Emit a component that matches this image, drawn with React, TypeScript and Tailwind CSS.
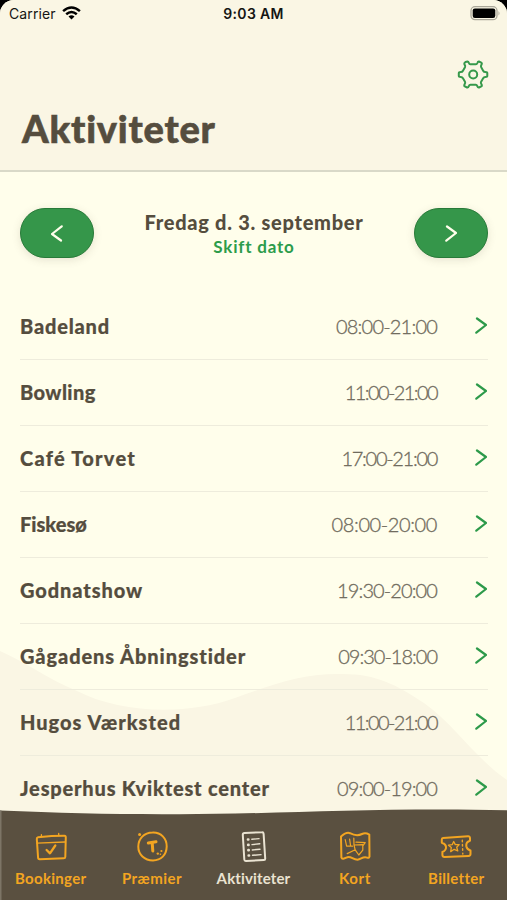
import React from 'react';

const activities = [
  { name: 'Badeland', time: '08:00-21:00', nameCls: 'tracking-[0.8px]', timeCls: 'tracking-[-0.8px]' },
  { name: 'Bowling', time: '11:00-21:00', nameCls: 'tracking-[0.4px]', timeCls: 'tracking-[-1.6px]' },
  { name: 'Café Torvet', time: '17:00-21:00', nameCls: 'tracking-[1.25px]', timeCls: 'tracking-[-1.3px]' },
  { name: 'Fiskesø', time: '08:00-20:00', nameCls: 'tracking-[0px]', timeCls: 'tracking-[-0.4px]' },
  { name: 'Godnatshow', time: '19:30-20:00', nameCls: 'tracking-[0.9px]', timeCls: 'tracking-[-0.9px]' },
  { name: 'Gågadens Åbningstider', time: '09:30-18:00', nameCls: 'tracking-[0.9px]', timeCls: 'tracking-[-1px]' },
  { name: 'Hugos Værksted', time: '11:00-21:00', nameCls: 'tracking-[1px]', timeCls: 'tracking-[-1.6px]' },
  { name: 'Jesperhus Kviktest center', time: '09:00-19:00', nameCls: 'tracking-[0.8px]', timeCls: 'tracking-[-0.9px]' },
];

const line = { fill: 'none', stroke: 'currentColor', strokeLinecap: 'round', strokeLinejoin: 'round' } as const;

const Chevron: React.FC<{ className?: string }> = ({ className }) => (
  <svg viewBox="0 0 12 17" className={className} {...line} strokeWidth="2.2">
    <path d="M2 1.5 L11 8 L1.3 15.7" />
  </svg>
);

const BookingIcon = () => (
  <svg width="34" height="34" viewBox="0 0 34 34" {...line} strokeWidth="2">
    <path d="M4 7.2 Q18 5.8 30.5 5.8 Q31.8 5.8 31.8 7.4 L31.3 27 Q31.2 28.3 29.8 28.3 L5.8 29.3 Q4.3 29.4 4.1 28 L2.8 9 Q2.7 7.4 4 7.2Z" />
    <path d="M3.2 13.2 L31 12" strokeWidth="1.3" />
    <path d="M7.4 4.6 V6.5 M24.7 3.5 V5.5" strokeWidth="1.3" />
    <path d="M12.6 20 L16 23.3 L21.3 15.5" strokeWidth="2.3" />
  </svg>
);

const PrizeIcon = () => (
  <svg width="34" height="34" viewBox="0 0 34 34" {...line} strokeWidth="2">
    <path d="M17.5 2.6 C26 2.2 31.8 8.5 31.7 16.5 C31.5 25 26 30.3 18 30.4 C9.5 30.3 3.2 24.5 3.3 16.5 C3.4 8.5 9 2.8 17.5 2.6Z" />
    <path d="M13.3 13 L21 11.8 M17.2 12.7 L17.8 21" strokeWidth="3" />
    <circle cx="4.6" cy="4.6" r="1.5" fill="currentColor" stroke="none" />
    <circle cx="22.8" cy="23.6" r="1.2" fill="currentColor" stroke="none" />
    <circle cx="26.4" cy="21" r="1.1" fill="currentColor" stroke="none" />
    <circle cx="25.4" cy="24.2" r="0.8" fill="currentColor" stroke="none" />
  </svg>
);

const ListIcon = () => (
  <svg className="relative left-px" width="34" height="34" viewBox="0 0 34 34" {...line} strokeWidth="2">
    <path d="M7.5 3 L25 2.3 Q26.5 2.2 26.6 3.7 L28.2 28.5 Q28.3 30 26.8 30.1 L9 31 Q7.4 31.1 7.3 29.5 L5.8 5 Q5.7 3.1 7.5 3Z" />
    <path d="M14.8 9.3 L22 8.6 M15 14.6 L22.8 13.8 M15.3 20 L23 19.2 M15.5 25.3 L24 24.6" strokeWidth="1.4" />
    <path d="M11 9.5 h.3 M11.2 14.9 h.3 M11.4 20.2 h.3 M11.7 25.5 h.3" strokeWidth="2.7" />
  </svg>
);

const MapIcon = () => (
  <svg width="34" height="34" viewBox="0 0 34 34" {...line} strokeWidth="2">
    <path d="M3 6.5 C7 3 9 2 12 3.2 C17 5.8 20 6 24 4 C27 2.5 29 3.2 31.3 4.6 L31.5 26.5 Q31 28.4 29 27.6 C25 26 23 29.5 19.5 29.8 C15 29.8 13 26 9.5 27.2 C6 28.6 4 29.5 3.4 27.5Z" />
    <path d="M7.2 9.5 L8.6 16.2 H14.5 M11.6 9 L12.6 16 M15.8 8 L16 15 L17.2 20 M9.2 23.6 L17.2 19.8 L20.8 25 L24.8 20.2 V15.8 L27.2 12.6 L18 12.2 M16 15 L24.6 14.6" strokeWidth="1.2" />
  </svg>
);

const TicketIcon = () => (
  <svg width="34" height="34" viewBox="0 0 34 34" {...line} strokeWidth="2">
    <path d="M4 8 L29 6.3 Q31 6.2 31 8 V10.8 Q26.8 12 27.3 16.2 Q28 19.5 31.5 20.5 V24 Q31.5 25.8 29.5 25.9 L5.5 27 Q3.5 27 3.4 25 V22 Q7.3 20.2 7 16.8 Q6.7 13.8 2.8 12.7 V9.5 Q2.8 8.1 4 8Z" />
    <path d="M14.7 11.5 L16.3 14.6 L20.2 14.6 L17.7 17.3 L18.8 21 L15.2 19.3 L11.7 21.6 L12.3 17.6 L9.5 15.2 L13.2 14.7Z" strokeWidth="1.3" />
    <path d="M23.3 10.2 L23.8 24" strokeWidth="1.4" strokeDasharray="1.5 2.8" />
  </svg>
);

const tabs = [
  { label: 'Bookinger', icon: <BookingIcon />, cls: 'text-[#f3a521] tracking-[0.3px]' },
  { label: 'Præmier', icon: <PrizeIcon />, cls: 'text-[#f3a521] tracking-[0.5px]' },
  { label: 'Aktiviteter', icon: <ListIcon />, cls: 'text-[#eae3d2] tracking-[0.15px]' },
  { label: 'Kort', icon: <MapIcon />, cls: 'text-[#f3a521] tracking-[0.6px]' },
  { label: 'Billetter', icon: <TicketIcon />, cls: 'text-[#f3a521] tracking-[0.3px]' },
];

const StatusBar = () => (
  <div className="grid h-7 grid-cols-3 items-center px-[9px] pb-px font-['Inter',sans-serif] text-[14px] text-[#151513]">
    <div className="flex items-center gap-[6px]">
      <span className="tracking-[0.1px]">Carrier</span>
      <svg className="mb-px" width="19" height="14" viewBox="0 0 19 14" fill="none" stroke="#000" strokeWidth="2.5">
        <path d="M1.1 5.1 Q9.5 -2.2 17.9 5.1" />
        <path d="M4.2 8.2 Q9.5 3.8 14.8 8.2" />
        <path d="M9.5 13.6 L6.5 10.5 Q9.5 8.1 12.5 10.5Z" fill="#000" stroke="none" />
      </svg>
    </div>
    <span className="whitespace-nowrap text-center font-semibold tracking-[0.3px]">9:03 AM</span>
    <svg className="-mr-[3px] justify-self-end" width="31" height="15" viewBox="0 0 31 15">
      <rect x="1" y="0.7" width="26" height="13" rx="4" fill="none" stroke="#aaa799" strokeWidth="1.3" />
      <rect x="2.7" y="2.4" width="22.6" height="9.6" rx="2.2" fill="#000" />
      <path d="M28.5 4.9 Q30.5 7.2 28.5 9.5Z" fill="#aaa799" />
    </svg>
  </div>
);

export default function App() {
  return (
    <div className="h-[900px] w-[507px] overflow-hidden bg-black">
      <div className="relative flex h-full flex-col overflow-hidden rounded-t-[14px] bg-[#fffeeb] font-['Lato',sans-serif] text-[#554d3e] [font-variant-ligatures:none]">
        {/* Rolling hill behind the list */}
        <svg className="absolute inset-0" width="507" height="900" viewBox="0 0 507 900">
          <path d="M0 651 C25 662 50 680 77 691 C120 713 185 716 235 698 C275 684 300 674 338 674 C375 673 395 684 424 703 C455 725 475 758 507 780 V900 H0Z" fill="#faf6e4" />
        </svg>

        <header className="relative flex h-[172px] shrink-0 flex-col border-b-2 border-[#d9d9c8] bg-[#faf6e4]">
          <StatusBar />
          <div className="flex justify-end pr-[18px] pt-[31px] text-[#36994b]">
            <svg width="32" height="32" viewBox="0 0 32 32" {...line} strokeWidth="2">
              <path d="M8.5 3 L10.5 2.5 Q11.4 2.5 11.9 4 Q12.4 5.5 13.6 5.3 L18.6 5.3 Q19.8 5.5 20.4 4 Q20.8 2.5 21.8 2.5 L24.3 3.7 Q25.3 4.2 24.5 5.7 Q23.5 7.1 24.2 8.3 L26.3 12 Q26.8 13 28.3 13 Q30.3 13 30.3 14.3 V16.8 Q30.3 18 28.3 18 Q26.8 18 26.3 19 L24 23 Q23.5 24 24.5 25.3 Q25.3 26.8 24.3 27.3 L22 28.5 Q20.9 28.8 20.3 27.2 Q19.7 25.7 18.6 25.8 H13.6 Q12.3 25.7 11.8 27.2 Q11.2 28.8 10.1 28.5 L7.8 27.3 Q6.8 26.8 7.6 25.3 Q8.6 23.8 8 22.8 L5.8 19 Q5.3 18 3.8 18 Q1.8 18 1.8 16.8 V14.3 Q1.8 13 3.8 13 Q5.3 13 5.8 12 L8 8.3 Q8.6 7.1 7.6 5.7 Q6.8 4 8.5 3Z" />
              <circle cx="16.2" cy="15.5" r="4" />
            </svg>
          </div>
          <h1 className="pl-[22px] pt-[13px] text-[38px] font-black leading-[48px] [-webkit-text-stroke:0.6px]"><span className="tracking-[0.8px]">Aktiviteter</span></h1>
        </header>

        <section className="relative flex h-[122px] shrink-0 items-start justify-between pl-5 pr-[19px] pt-9">
          <button className="flex h-[50px] w-[74px] items-center justify-center rounded-full border border-[#287a39] bg-[#35964a] text-[#fffeeb] shadow-[0_2px_8px_rgba(85,77,62,0.15)]">
            <Chevron className="mt-px h-[17px] w-3 rotate-180" />
          </button>
          <div className="flex flex-col items-center whitespace-nowrap">
            <span className="text-[20px] font-black leading-[28px]"><span className="tracking-[0.72px]">Fredag d. 3. september</span></span>
            <span className="text-[17px] font-bold leading-[21px] text-[#2c9c4b]"><span className="tracking-[0.8px]">Skift dato</span></span>
          </div>
          <button className="flex h-[50px] w-[74px] items-center justify-center rounded-full border border-[#287a39] bg-[#35964a] text-[#fffeeb] shadow-[0_2px_8px_rgba(85,77,62,0.15)]">
            <Chevron className="mt-px h-[17px] w-3" />
          </button>
        </section>

        <ul className="relative pl-5 pr-[19px]">
          {activities.map((a) => (
            <li key={a.name} className="flex h-[66px] items-center border-b border-[#eeecdc] pb-[2px] whitespace-nowrap">
              <span className="flex-1 text-[20px] font-black [-webkit-text-stroke:0.2px]"><span className={a.nameCls}>{a.name}</span></span>
              <span className="text-[20px] font-light text-[#706b5d] [-webkit-text-stroke:0.3px]"><span className={a.timeCls}>{a.time}</span></span>
              <Chevron className="ml-[38px] mr-px h-[17px] w-3 text-[#2d9a4a]" />
            </li>
          ))}
        </ul>

        <nav className="absolute inset-x-0 bottom-0 h-[92px]">
          <svg className="absolute inset-0" width="507" height="92" viewBox="0 0 507 92">
            <path d="M0 2.5 C80 6 150 7 235 5.5 C320 4 400 0 507 2.3 V92 H0Z" fill="#5a5040" />
            <path d="M0 2.5 H1.5 V92 H0Z" fill="#7d7566" />
          </svg>
          <div className="relative grid h-full grid-cols-5 pt-[22px]">
            {tabs.map((t) => (
              <div key={t.label} className={'flex flex-col items-center gap-[5px] text-[15px] font-bold leading-[18px] ' + t.cls}>
                {t.icon}
                <span>{t.label}</span>
              </div>
            ))}
          </div>
        </nav>
      </div>
    </div>
  );
}
